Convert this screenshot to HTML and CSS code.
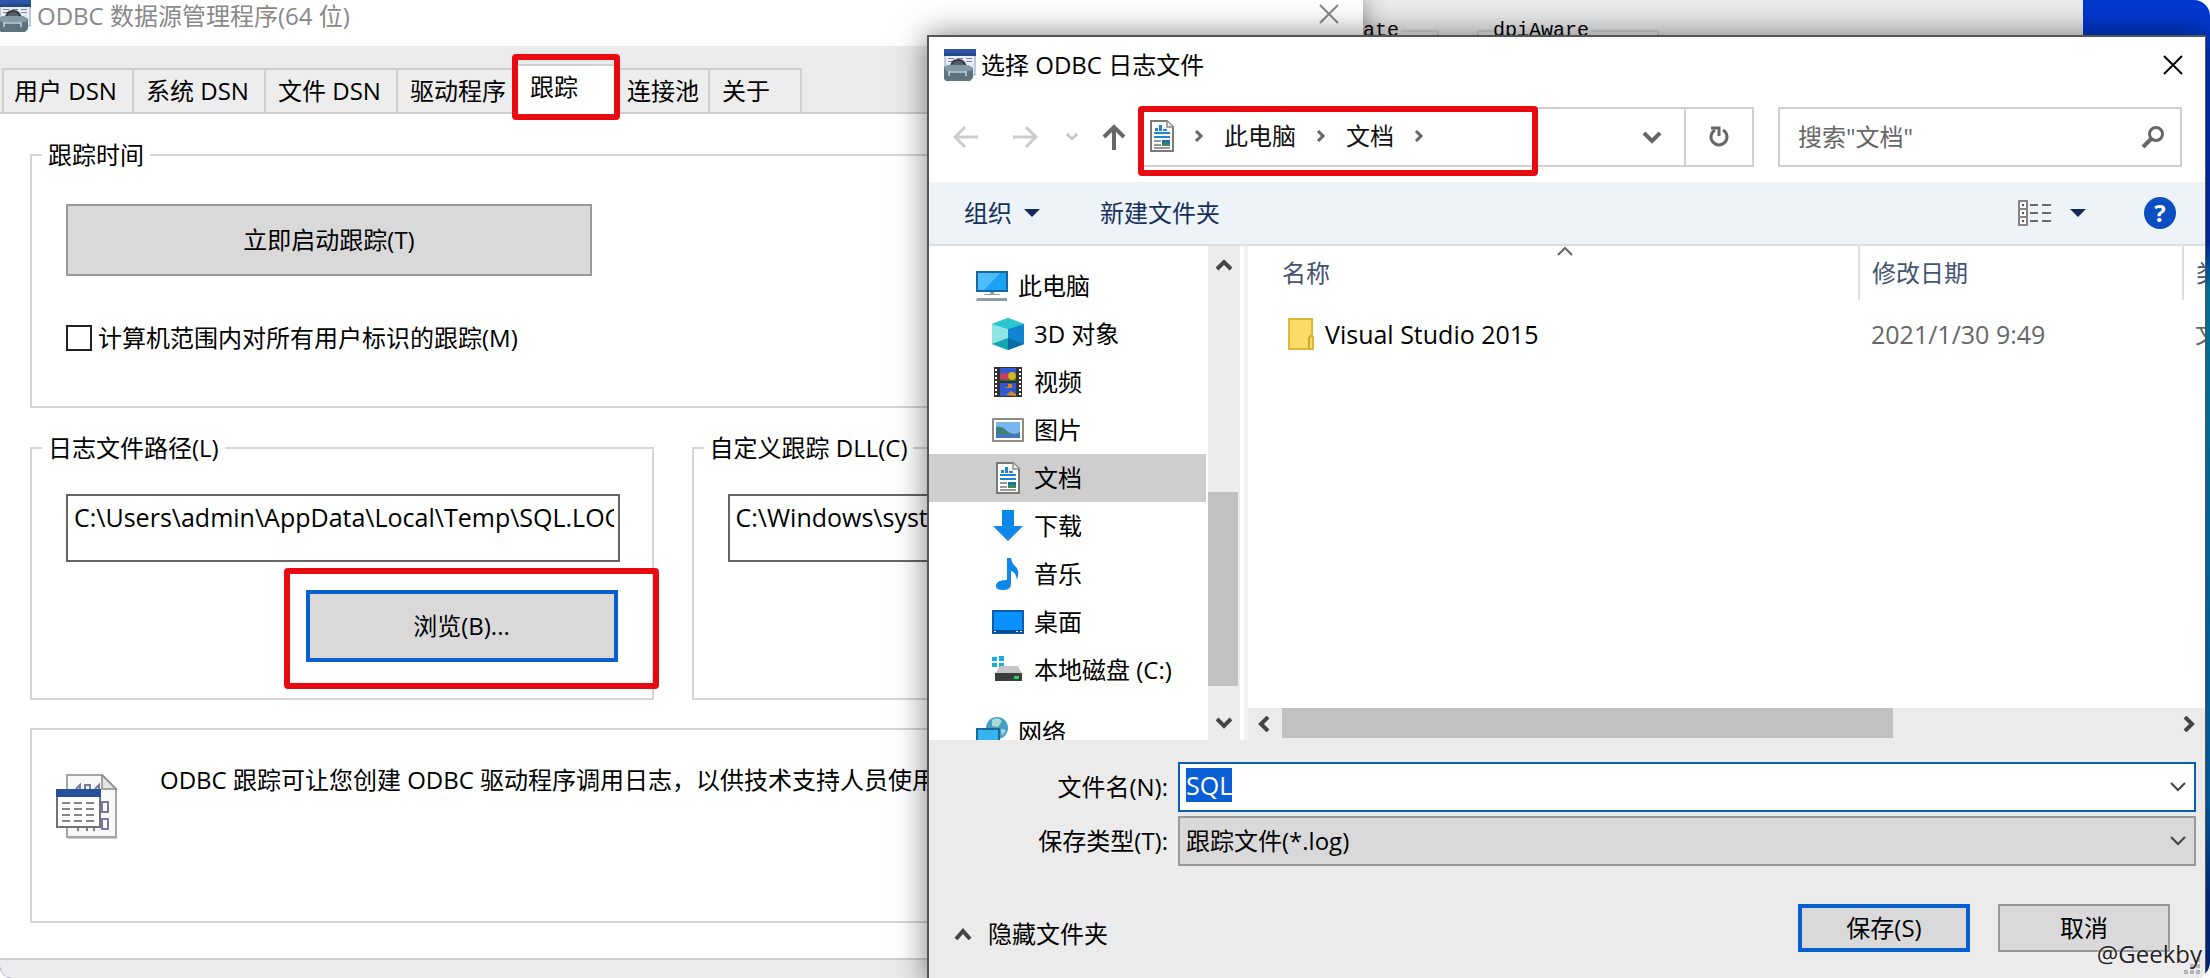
FILE: index.html
```
<!DOCTYPE html>
<html lang="zh-CN">
<head>
<meta charset="utf-8">
<title>ODBC 数据源管理程序(64 位)</title>
<link rel="stylesheet" href="styles.css">
</head>
<body>
<svg class="defs" aria-hidden="true">
  <symbol id="doc" viewBox="0 0 24 32">
    <path d="M1 1h16l6 6v24H1z" fill="#fff" stroke="#7a7a7a" stroke-width="2"/>
    <path d="M17 1v6h6" fill="#eee" stroke="#8a8a8a" stroke-width="1.5"/>
    <path d="M9 5h3v6H9zM5 8h3v3H5zM4 12h16v2H4zM13 9h4v2h-4zM4 16h16v2H4z" fill="#1f86cf"/>
    <path d="M4 20h7v2H4zM4 24h7v2H4zM4 27h16v2H4z" fill="#9a9a9a"/>
    <path d="M12 20h8v6h-8z" fill="#1b6fa8"/><path d="M12 24l4-2 4 2v2h-8z" fill="#3d8b4f"/>
  </symbol>
  <symbol id="toolbox" viewBox="0 0 32 32">
    <path d="M1 1h30v25H1z" fill="#e9edf5" stroke="#8e9ab3"/>
    <path d="M0 0h32v7H0z" fill="#2c55a5"/>
    <path d="M0 4h32v3H0z" fill="#24478c"/>
    <path d="M4 9h6v1H4zM13 9h6v1h-6zM22 9h6v1h-6zM4 12h6v1H4zM22 12h6v1h-6z" fill="#7d8799"/>
    <path d="M7 19q0-8 7-8t8 8" fill="#55606a" stroke="#333b42" stroke-width="2"/>
    <path d="M0 18l4-2h20l5 3v10l-3 3H2l-2-2z" fill="#5d7480"/>
    <path d="M0 18l4-2h20l5 3-2 3H2z" fill="#8399a3"/>
    <path d="M5 22v5M22 22v5M5 23h17" stroke="#c3d0d6" stroke-width="1.5" fill="none"/>
  </symbol>
  <symbol id="right" viewBox="0 0 10 14"><path d="M2 2l5 5-5 5" fill="none" stroke="currentColor" stroke-width="3"/></symbol>
  <symbol id="down" viewBox="0 0 16 10"><path d="M1 1l7 7 7-7" fill="none" stroke="currentColor" stroke-width="2"/></symbol>
  <symbol id="boldup" viewBox="0 0 16 14"><path d="M1 11l7-7 7 7" fill="none" stroke="currentColor" stroke-width="4"/></symbol>
  <symbol id="cross" viewBox="0 0 20 20"><path d="M1 1l18 18M19 1L1 19" stroke="currentColor" stroke-width="2"/></symbol>
  <symbol id="caret" viewBox="0 0 16 8"><path d="M0 0h16L8 8z" fill="#0f2d57"/></symbol>
</svg>

<main class="desktop">
  <section class="backwin" aria-label="设置">
    <fieldset class="backbox first"><legend>ate</legend></fieldset>
    <fieldset class="backbox"><legend>dpiAware</legend></fieldset>
  </section>

  <section class="odbc" aria-label="ODBC 数据源管理程序">
    <header class="titlebar">
      <svg class="i32"><use href="#toolbox"/></svg>
      <h1>ODBC 数据源管理程序(64 位)</h1>
      <button class="close" aria-label="关闭"><svg class="i20"><use href="#cross"/></svg></button>
    </header>
    <nav class="tabs" role="tablist">
      <button class="tab wide" role="tab">用户 DSN</button>
      <button class="tab wide" role="tab">系统 DSN</button>
      <button class="tab wide" role="tab">文件 DSN</button>
      <button class="tab mid" role="tab">驱动程序</button>
      <button class="tab active marked" role="tab" aria-selected="true">跟踪</button>
      <button class="tab" role="tab">连接池</button>
      <button class="tab last" role="tab">关于</button>
    </nav>
    <div class="page">
      <fieldset class="group when">
        <legend>跟踪时间</legend>
        <button class="btn start">立即启动跟踪(T)</button>
        <label class="check"><input type="checkbox">计算机范围内对所有用户标识的跟踪(M)</label>
      </fieldset>
      <div class="pair">
        <fieldset class="group path">
          <legend id="lp">日志文件路径(L)</legend>
          <input class="text" type="text" aria-labelledby="lp" value="C:\Users\admin\AppData\Local\Temp\SQL.LOG">
          <div class="browse marked"><button class="btn primary">浏览(B)...</button></div>
        </fieldset>
        <fieldset class="group path">
          <legend id="ld">自定义跟踪 DLL(C)</legend>
          <input class="text" type="text" aria-labelledby="ld" value="C:\Windows\system32\odbctrac.dll">
        </fieldset>
      </div>
      <div class="group note">
        <svg class="noteicon" viewBox="0 0 62 66">
          <path d="M12 2h34l15 15v48H12z" fill="#c9c9c9"/>
          <path d="M11 1h35l14 14v48H11z" fill="#f8f8f8" stroke="#a6a6a6" stroke-width="2"/>
          <path d="M46 1v14h14z" fill="#e4e4e4" stroke="#8c8c8c" stroke-width="1.5"/>
          <path d="M20 15l4-4v6M29 11h5v6h-5zM39 15l4-4v6M46 28h6v10h-6zM46 45h6v10h-6zM22 54v3M31 54v3M38 54v3" fill="none" stroke="#777a9c" stroke-width="2"/>
          <path d="M1 16h43v37H1z" fill="#fff" stroke="#737373" stroke-width="2"/>
          <path d="M0 15h45v8H0z" fill="#28509a"/>
          <path d="M6 29h8M18 29h8M30 29h8M6 35h8M18 35h8M30 35h8M6 41h8M18 41h8M30 41h8M6 47h8M18 47h8M30 47h8" stroke="#858585" stroke-width="2"/>
        </svg>
        <p>ODBC 跟踪可让您创建 ODBC 驱动程序调用日志，以供技术支持人员使用</p>
      </div>
    </div>
  </section>

  <section class="dialog" role="dialog" aria-label="选择 ODBC 日志文件">
    <header class="dtitle">
      <svg class="i32"><use href="#toolbox"/></svg>
      <h2>选择 ODBC 日志文件</h2>
      <button class="close" aria-label="关闭"><svg class="i20"><use href="#cross"/></svg></button>
    </header>

    <div class="location">
      <div class="history">
        <button aria-label="后退" disabled><svg width="26" height="24" viewBox="0 0 26 24"><path d="M25 12H2M12 2L2 12l10 10" fill="none" stroke="#ccc" stroke-width="3"/></svg></button>
        <button aria-label="前进" disabled><svg width="26" height="24" viewBox="0 0 26 24"><path d="M1 12h23M14 2l10 10-10 10" fill="none" stroke="#ccc" stroke-width="3"/></svg></button>
        <button class="recent" aria-label="最近" disabled><svg width="12" height="8" viewBox="0 0 12 8"><path d="M1 1l5 5 5-5" fill="none" stroke="#c4c4c4" stroke-width="2.5"/></svg></button>
        <button aria-label="向上"><svg width="24" height="26" viewBox="0 0 24 26"><path d="M12 26V3M2 13L12 3l10 10" fill="none" stroke="#666" stroke-width="4"/></svg></button>
      </div>
      <div class="address">
        <div class="crumbs marked">
          <svg class="docicon"><use href="#doc"/></svg>
          <svg class="sep"><use href="#right"/></svg>
          <a href="#pc">此电脑</a>
          <svg class="sep"><use href="#right"/></svg>
          <a href="#docs">文档</a>
          <svg class="sep"><use href="#right"/></svg>
        </div>
        <button class="drop" aria-label="以前的位置"><svg width="20" height="14" viewBox="0 0 20 14"><path d="M2 3l8 8 8-8" fill="none" stroke="#666" stroke-width="4"/></svg></button>
        <button class="refresh" aria-label="刷新"><svg width="24" height="24" viewBox="0 0 24 24"><path d="M16 5A8 8 0 1 1 8 5" fill="none" stroke="#666" stroke-width="3"/><path d="M4 3h8v8" fill="none" stroke="#666" stroke-width="3"/></svg></button>
      </div>
      <label class="search"><input type="search" aria-label="搜索文档" placeholder='搜索"文档"'>
        <svg width="26" height="24" viewBox="0 0 26 24"><circle cx="16" cy="9" r="6.5" fill="none" stroke="#666" stroke-width="3"/><path d="M11 14l-8 8" stroke="#666" stroke-width="4"/></svg>
      </label>
    </div>

    <div class="toolbar">
      <button>组织 <svg class="caret"><use href="#caret"/></svg></button>
      <button>新建文件夹</button>
      <button class="view" aria-label="更改视图"><svg width="34" height="26" viewBox="0 0 34 26"><path d="M1 1h8v24H1zM1 9h8M1 17h8" fill="#fff" stroke="#8c8484" stroke-width="2"/><path d="M4 4h2v2H4zM4 12h2v2H4z" fill="#456"/><path d="M4 20h2v2H4z" fill="#a33"/><path d="M12 5h8M24 5h9M12 13h8M24 13h9M12 21h8M24 21h9" stroke="#6b6b6b" stroke-width="2"/></svg><svg class="caret"><use href="#caret"/></svg></button>
      <button class="help" aria-label="帮助">?</button>
    </div>

    <div class="browser">
      <ul class="tree">
        <li class="top"><svg class="i32" viewBox="0 0 32 32"><path d="M1 2h30v19H1z" fill="#1aa3f5" stroke="#16679e" stroke-width="2"/><path d="M2 3h22L8 20H2z" fill="#4dbcfa"/><path d="M14 22h4v2h-4zM8 24h16v1H8z" fill="#8aa0b0"/><path d="M1 28h30v3H0z" fill="#8e9cab"/></svg>此电脑</li>
        <li><svg class="i32" viewBox="0 0 32 32"><path d="M0 6l16-6 16 6v20l-16 6-16-6z" fill="#18b4cf"/><path d="M0 6l16 5v21L0 26z" fill="#8fe5e3"/><path d="M16 11l16-5v20l-16 6z" fill="#0f86cf"/><path d="M0 6l16-6 16 6-16 5z" fill="#2cc6cf"/><path d="M0 26l16-6v12z" fill="#14a5b5"/><path d="M16 20l16 6-16 6z" fill="#0c6da5"/></svg>3D 对象</li>
        <li><svg class="i32" viewBox="0 0 32 32"><path d="M2 1h28v30H2z" fill="#333"/><path d="M4 3v27M28 3v27" stroke="#fff" stroke-width="2" stroke-dasharray="2 2"/><path d="M8 2h16v13H8zM8 17h16v13H8z" fill="#315ad0"/><path d="M8 8h16v7H8z" fill="#23703a"/><path d="M8 8l7-1 2 7-9-1z" fill="#d63a5e"/><circle cx="20" cy="10" r="4" fill="#d5b514"/><path d="M12 21h4v-3h4v4h-5zM14 29l5-4 5 3v2z" fill="#de842b"/></svg>视频</li>
        <li><svg class="i32" viewBox="0 0 32 32"><path d="M1 5h30v22H1z" fill="#fff" stroke="#8d8d85" stroke-width="2"/><path d="M4 8h24v16H4z" fill="#79b5ee"/><path d="M4 13q6-1 11 4t13 1v6H4z" fill="#3d8277"/><path d="M4 20h24v4H4z" fill="#4178b8"/></svg>图片</li>
        <li class="selected"><svg class="i32"><use href="#doc"/></svg>文档</li>
        <li><svg class="i32" viewBox="0 0 32 32"><path d="M10 0h12v16h9L16 31 1 16h9z" fill="#0f87ea"/></svg>下载</li>
        <li><svg class="i32" viewBox="0 0 32 32"><path d="M15 0h4q1 6 5 9t1 13q-1-8-6-9v13q0 6-8 6t-7-5 11-5z" fill="#0f87ea"/></svg>音乐</li>
        <li><svg class="i32" viewBox="0 0 32 32"><path d="M1 5h30v22H1z" fill="#0a91ff" stroke="#0c5eb0" stroke-width="2"/><path d="M1 24h30v3H1z" fill="#084d92"/><path d="M2 25h2v1H2zM24 25h2v1h-2zM28 25h2v1h-2z" fill="#fff"/></svg>桌面</li>
        <li><svg class="i32" viewBox="0 0 32 32"><path d="M0 3h5v4H0zM7 2h5v5H7zM0 9h5v4H0zM7 9h5v5H7z" fill="#14b1df"/><path d="M8 12h18l4 8H3z" fill="#c3c5c7"/><path d="M3 19h27v8H3z" fill="#3c3e40"/><path d="M22 22h5v3h-5z" fill="#27d354"/></svg>本地磁盘 (C:)</li>
        <li class="top net"><svg class="i32" viewBox="0 0 32 32"><circle cx="21" cy="12" r="11" fill="#459fc4"/><path d="M16 4q6-4 10 1l-4 6-6-1zM25 13l5 1-4 6z" fill="#a9dcd5"/><path d="M1 13h22v15H1z" fill="#36b3ef" stroke="#156a9a" stroke-width="2"/></svg>网络</li>
      </ul>
      <div class="vscroll" aria-hidden="true">
        <svg class="arrow"><use href="#boldup"/></svg>
        <div class="track"><div class="thumb"></div></div>
        <svg class="arrow flip"><use href="#boldup"/></svg>
      </div>
      <div class="files">
        <table>
          <thead><tr><th>名称<svg class="sort" viewBox="0 0 16 10"><path d="M1 9l7-7 7 7" fill="none" stroke="#666" stroke-width="2"/></svg></th><th class="date">修改日期</th><th class="type">类型</th></tr></thead>
          <tbody><tr><td class="name"><div><svg width="26" height="32" viewBox="0 0 26 32"><path d="M1 1h23v17l1 1v12H1z" fill="#fbdc69" stroke="#e0b53c" stroke-width="2"/><path d="M21 31V20l2-3" fill="none" stroke="#d7a520" stroke-width="2"/></svg>Visual Studio 2015</div></td><td>2021/1/30 9:49</td><td>文件夹</td></tr></tbody>
        </table>
        <div class="hscroll" aria-hidden="true">
          <svg class="arrow left"><use href="#boldup"/></svg>
          <div class="track"><div class="thumb"></div></div>
          <svg class="arrow rightward"><use href="#boldup"/></svg>
        </div>
      </div>
    </div>

    <form class="save" onsubmit="return false">
      <label for="fname">文件名(N):</label>
      <div class="combo"><input id="fname" type="text" value="SQL"><svg class="chev"><use href="#down"/></svg></div>
      <label for="ftype">保存类型(T):</label>
      <div class="combo grey"><select id="ftype"><option>跟踪文件(*.log)</option></select><svg class="chev"><use href="#down"/></svg></div>
      <div class="actions">
        <button type="button" class="hide"><svg width="18" height="14" viewBox="0 0 18 14"><path d="M2 12l7-8 7 8" fill="none" stroke="#444" stroke-width="4"/></svg>隐藏文件夹</button>
        <button class="btn primary">保存(S)</button>
        <button type="button" class="btn">取消</button>
      </div>
    </form>
    <svg class="grip" viewBox="0 0 16 16"><path d="M12 0h4v4h-4zM6 6h4v4H6zM12 6h4v4h-4zM0 12h4v4H0zM6 12h4v4H6zM12 12h4v4h-4z" fill="#b4b4b4"/></svg>
  </section>
  <span class="watermark">@Geekby</span>
</main>
<script src="main.js"></script>
</body>
</html>
```
FILE: styles.css
```
* { box-sizing: border-box; }
body {
  margin: 0;
  background: #fff;
  color: #000;
  font: 24px/32px "Open Sans", "Noto Sans CJK SC", sans-serif;
}
button, input, select { font: inherit; color: inherit; margin: 0; border-radius: 0; }
button { background: none; border: 0; padding: 0; white-space: nowrap; }
h1, h2, p { margin: 0; font: inherit; white-space: nowrap; }
svg { display: block; flex: none; }
.defs { position: absolute; width: 0; height: 0; }
.i32 { width: 32px; height: 32px; }
.i20 { width: 20px; height: 20px; }

.desktop {
  position: relative;
  height: 100vh;
  overflow: hidden;
  border-radius: 0 16px 16px 12px;
  background: linear-gradient(#0038d0 0, #0030c0 240px, #0090c0 290px, #0070c0 800px, #003090 900px);
}

/* highlight frame drawn around a control */
.marked { position: relative; }
.marked::after {
  content: "";
  position: absolute;
  border: 6px solid #e80a10;
  border-radius: 4px;
  pointer-events: none;
}

/* window behind */
.backwin {
  position: absolute;
  inset: 0 127px auto 1363px;
  height: 200px;
  display: flex;
  gap: 38px;
  padding-top: 17px;
  background: #ebebeb;
  font: 20px/28px "Liberation Mono", monospace;
}
.backbox { margin: 0; height: 100px; padding: 0 66px 0 14px; border: 2px solid #d6d6d6; }
.backbox.first { padding: 0 36px 0 0; border-left: 0; }
.backbox legend { padding: 0 2px 0 0; }

/* ODBC window */
.odbc {
  position: absolute;
  inset: 0 auto 0 0;
  width: 1363px;
  display: flex;
  flex-direction: column;
  background: #ebebeb;
  box-shadow: 0 0 24px rgba(0, 0, 0, .45);
}
.titlebar {
  display: flex;
  align-items: flex-start;
  gap: 6px;
  height: 46px;
  padding-right: 24px;
  background: #fff;
  color: #888;
}
.close { margin-left: auto; }
.titlebar .close { padding-top: 4px; }
.titlebar .i32 { margin-left: -1px; }
.tabs {
  display: flex;
  align-items: flex-end;
  height: 68px;
  padding-left: 2px;
  border-bottom: 2px solid #cdcdcd;
}
.tab {
  height: 44px;
  min-width: 92px;
  border: solid #d0d0d0;
  border-width: 2px 2px 0 0;
  background: #ededed;
}
.tab:first-child { border-left-width: 2px; }
.wide { min-width: 132px; padding-left: 12px; text-align: left; }
.wide:first-child { padding-left: 10px; }
.mid { min-width: 116px; padding-left: 12px; text-align: left; }
.active {
  height: 50px;
  width: 104px;
  margin-bottom: -2px;
  padding: 0 0 6px 16px;
  background: #fff;
  text-align: left;
}
.active::after { inset: -12px -4px -6px -2px; }
.last { padding-left: 12px; text-align: left; }
.page {
  flex: 1;
  margin-bottom: 18px;
  padding: 25px 48px 0 30px;
  border-bottom: 2px solid #cdcdcd;
  background: #fff;
}
.group { min-width: 0; margin: 0; border: 2px solid #d6d6d6; }
.group legend { margin-left: -24px; padding: 0 6px; }
.when { padding: 33px 34px 52px; }
.btn { min-width: 172px; height: 48px; border: 2px solid #999; background: #d9d9d9; }
.primary { border: 4px solid #085fce; }
.start { display: block; width: 526px; height: 72px; }
.check { display: flex; align-items: center; gap: 6px; margin-top: 46px; }
.check input { appearance: none; width: 26px; height: 26px; border: 2px solid #222; background: #fff; }
.pair { display: grid; grid-template-columns: 1fr 1fr; gap: 38px; margin-top: 24px; }
.path { padding: 30px 32px 36px 34px; }
.text {
  display: block;
  width: 100%;
  height: 68px;
  padding: 0 4px 22px 6px;
  border: 2px solid #666;
  background: #fff;
  font-size: 25px;
}
.browse { width: 312px; margin: 28px 2px 0 auto; }
.browse .btn { display: block; width: 100%; height: 72px; }
.browse::after { inset: -22px -41px -27px -22px; }
.note { display: flex; gap: 42px; height: 195px; margin-top: 28px; padding: 34px 24px; overflow: hidden; }
.noteicon { width: 62px; height: 66px; margin-top: 10px; }

/* save dialog */
.dialog {
  position: absolute;
  inset: 35px 4px -8px 927px;
  display: flex;
  flex-direction: column;
  border: 2px solid #555;
  border-right-width: 1px;
  background: #fff;
  box-shadow: 0 0 30px rgba(0, 0, 0, .5);
}
.dtitle { display: flex; align-items: center; gap: 5px; height: 56px; padding: 0 22px 0 15px; }
.location { display: flex; align-items: center; gap: 24px; padding: 14px 23px 15px 24px; }
.history { display: flex; align-items: center; margin-right: -11px; }
.history button { margin-right: 33px; }
.history button:nth-child(2) { margin-right: 28px; }
.history .recent { margin-right: 24px; }
.history button:last-child { margin-right: 0; }
.address { display: flex; flex: 1; height: 60px; border: 2px solid #d0d0d0; }
.crumbs { display: flex; align-items: center; width: 397px; padding: 0 0 2px 9px; }
.crumbs::after { inset: -3px 0 -11px -3px; }
.docicon { width: 24px; height: 32px; margin-right: 20px; }
.crumbs a { margin: 0 20px; color: #111; text-decoration: none; }
.sep { width: 10px; height: 14px; color: #666; }
.drop { margin-left: auto; width: 64px; display: grid; place-items: center; }
.refresh { width: 68px; display: grid; place-items: center; border-left: 2px solid #d0d0d0; }
.search { display: flex; align-items: center; width: 404px; height: 60px; padding: 0 14px 0 18px; border: 2px solid #d0d0d0; }
.search input { flex: 1; min-width: 0; padding: 0; border: 0; outline: 0; background: none; appearance: none; }
.search input::placeholder { color: #666; opacity: 1; }
.toolbar {
  display: flex;
  align-items: center;
  gap: 60px;
  height: 64px;
  padding: 0 29px 0 35px;
  border-bottom: 2px solid #dcdfe2;
  background: #eef3f7;
  color: #16315a;
}
.toolbar button { display: flex; align-items: center; gap: 12px; }
.caret { width: 16px; height: 8px; }
.toolbar .view { gap: 18px; margin-left: auto; }
.toolbar .help {
  justify-content: center;
  width: 32px;
  height: 32px;
  border-radius: 50%;
  background: #0a4fc0;
  color: #fff;
  font-weight: 700;
}
.view + .help { margin-left: -2px; }

.browser { display: flex; height: 494px; }
.tree { width: 279px; margin: 0; padding: 16px 0 0; list-style: none; overflow: hidden; }
.tree li { display: flex; align-items: center; gap: 10px; height: 48px; padding-left: 63px; white-space: nowrap; }
.tree .top { padding-left: 47px; }
.tree .selected { width: 277px; background: #cecece; }
.tree .net { margin-top: 14px; }
.vscroll { display: flex; flex-direction: column; align-items: center; width: 32px; padding: 12px 0 10px; background: #ebebeb; }
.arrow { width: 16px; height: 14px; color: #444; }
.flip { transform: rotate(180deg); }
.left { transform: rotate(-90deg); }
.rightward { transform: rotate(90deg); }
.vscroll .track { flex: 1; width: 100%; padding-top: 220px; }
.vscroll .thumb { width: 30px; height: 194px; background: #c1c1c1; }
.files {
  flex: 1;
  min-width: 0;
  display: flex;
  flex-direction: column;
  margin-left: 4px;
  border-left: 4px solid #f2f2f2;
  overflow: hidden;
}
table { width: 100%; table-layout: fixed; border-collapse: collapse; }
th, td { padding: 0 0 0 12px; text-align: left; font-weight: 400; white-space: nowrap; overflow: hidden; }
th { position: relative; height: 54px; border-right: 2px solid #dedede; color: #44546e; }
th:first-child { padding-left: 34px; }
th:last-child { border-right: 0; }
.date { width: 324px; }
.type { width: 22px; }
.sort { position: absolute; top: 0; left: 50%; width: 16px; height: 10px; margin-left: 4px; }
td { height: 68px; color: #666; font-size: 25px; }
td:last-child { font-size: 24px; }
.name { padding-left: 40px; color: #000; }
.name div { display: flex; align-items: center; gap: 11px; }
.hscroll { display: flex; align-items: center; height: 32px; margin-top: auto; padding: 0 8px; background: #ebebeb; }
.hscroll .track { flex: 1; height: 100%; padding-left: 10px; }
.hscroll .thumb { width: 68%; height: 30px; background: #c1c1c1; }

.save {
  flex: 1;
  display: grid;
  grid-template-columns: 239px 1fr;
  grid-auto-rows: max-content;
  gap: 4px 10px;
  padding: 22px 9px 0 0;
  background: #ebebeb;
}
.save label { align-self: center; text-align: right; }
.combo { position: relative; }
.combo input, .combo select {
  display: block;
  width: 100%;
  height: 50px;
  padding: 0 40px 0 6px;
  border: 2px solid #085fb8;
  outline: 0;
  background: #fff;
  appearance: none;
}
.combo input { padding-bottom: 4px; font-size: 25px; }
.combo input::selection { background: #0a5fd6; color: #fff; }
.combo.grey select { border-color: #999; background: #d9d9d9; }
.chev { position: absolute; top: 20px; right: 10px; width: 16px; height: 10px; color: #444; pointer-events: none; }
.actions { grid-column: 1 / -1; display: flex; align-items: center; gap: 28px; padding: 34px 26px 0 25px; }
.hide { display: flex; align-items: center; gap: 16px; margin: 12px auto 0 0; }
.grip { position: absolute; right: 5px; bottom: 10px; width: 16px; height: 16px; }
.watermark { position: absolute; right: 8px; bottom: 8px; color: #222; text-shadow: 0 0 2px #fff; }
```
FILE: main.js
```
// The file name starts out selected, ready to be typed over.
const fileName = document.getElementById("fname");
fileName.focus();
fileName.select();
```
